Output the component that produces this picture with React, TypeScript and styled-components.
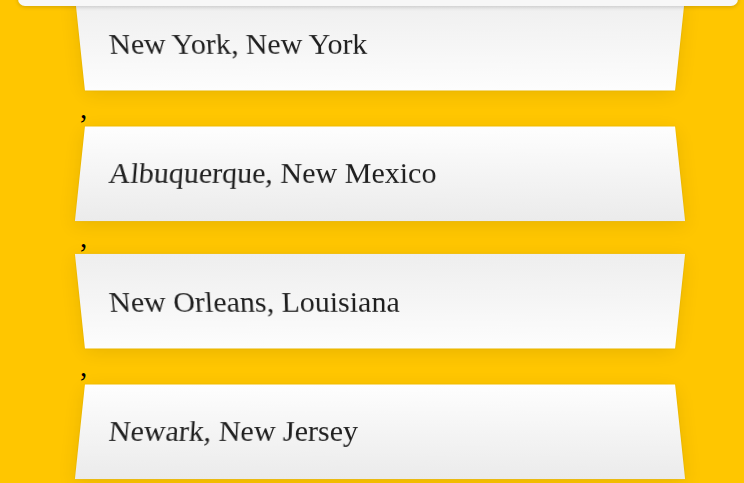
import React from 'react'
import styled, { createGlobalStyle } from 'styled-components'

const cities = [
  'New York, New York',
  'Albuquerque, New Mexico',
  'New Orleans, Louisiana',
  'Newark, New Jersey',
]

const App: React.FC = () => {
  return (
    <>
      <GlobalStyle />
      <TopBar />
      <List>
        {cities.map((city, i) => (
          <React.Fragment key={city}>
            {i > 0 && ','}
            <Card $tilt={i % 2 === 0 ? 'up' : 'down'}>{city}</Card>
          </React.Fragment>
        ))}
      </List>
    </>
  )
}
export default App

const GlobalStyle = createGlobalStyle`
  html, body {
    margin: 0;
    height: 100%;
    overflow: hidden;
    background: #ffc600;
  }

  body {
    font-family: 'Liberation Serif', 'Times New Roman', serif;
    font-size: 16px;
    color: #000;
  }
`

const TopBar = styled.div`
  position: fixed;
  top: -50px;
  left: 18px;
  width: 720px;
  height: 56px;
  border-radius: 7px;
  background: #f7f7f7;
  box-shadow: 0 1px 4px rgba(0, 0, 0, 0.18);
  z-index: 2;
`

const List = styled.div`
  width: 600px;
  margin: -4.5px 0 0 80px;
  font-size: 28.8px;
`

const Card = styled.div<{ $tilt: 'up' | 'down' }>`
  display: flex;
  align-items: center;
  box-sizing: border-box;
  height: 96px;
  padding: 0 29px;
  font-size: 30px;
  color: #1e1e1e;
  background: ${({ $tilt }) =>
    $tilt === 'up'
      ? 'linear-gradient(to bottom, #eeeeee, #fdfdfd)'
      : 'linear-gradient(to bottom, #fefefe, #ebebeb)'};
  box-shadow: 0 0 1px rgba(0, 0, 0, 0.2), 0 4px 18px rgba(0, 0, 0, 0.09);
  transform: perspective(500px)
    rotateX(${({ $tilt }) => ($tilt === 'up' ? '-10deg' : '10deg')});
`
